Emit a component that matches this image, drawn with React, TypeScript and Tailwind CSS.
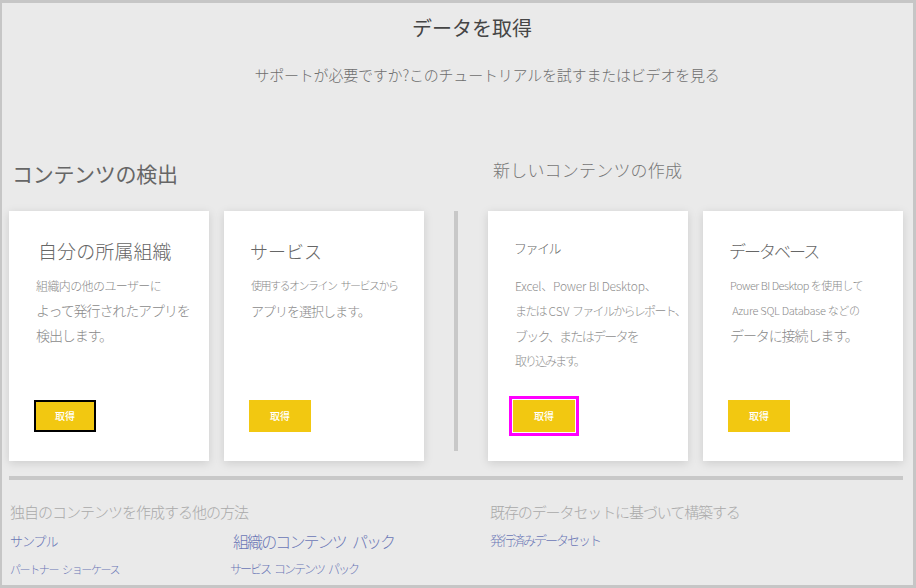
import React from "react";

type Line = { text: React.ReactNode; cls: string };

function GetButton({ variant }: { variant?: "focus" | "magenta" }) {
  const base =
    "w-[62px] h-[32px] bg-[#f2c811] text-white text-[10px] font-medium flex items-center justify-center leading-none box-border";
  if (variant === "focus") {
    return <div className={base + " border-2 border-black"}>取得</div>;
  }
  if (variant === "magenta") {
    return (
      <div className={base + " shadow-[0_0_0_1px_#ffffff,0_0_0_4px_#ff00ff]"}>取得</div>
    );
  }
  return <div className={base}>取得</div>;
}

function Card({
  title,
  titleCls,
  lines,
  variant,
}: {
  title: string;
  titleCls: string;
  lines: Line[];
  variant?: "focus" | "magenta";
}) {
  return (
    <div className="w-[200px] h-[250px] bg-white shadow-[0_2px_9px_rgba(0,0,0,0.13)] flex flex-col pl-[25px] pb-[29px]">
      <div className={"pt-[26px] h-[54px] leading-[28px] whitespace-nowrap " + titleCls}>{title}</div>
      <div className="mt-[8px] pl-[2px] flex flex-col">
        {lines.map((l, i) => (
          <div key={i} className={"h-[25px] leading-[25px] whitespace-nowrap " + l.cls}>
            {l.text}
          </div>
        ))}
      </div>
      <div className="mt-auto">
        <GetButton variant={variant} />
      </div>
    </div>
  );
}

export default function App() {
  return (
    <div className="w-[916px] h-[588px] box-border bg-[#eaeaea] border-solid border-[#c6c6c6] border-t-[3px] border-l-[2px] border-r-[3px] border-b-[3px] flex flex-col font-['Noto_Sans_CJK_JP',sans-serif] font-light overflow-hidden">
      {/* header */}
      <div className="pt-[11px] pl-[29px] text-center text-[20px] leading-[28px] text-[#454545] font-normal">
        データを取得
      </div>
      <div className="mt-[22px] pl-[59px] text-center text-[15px] leading-[22px] text-[#6e6e6e] tracking-[-0.2px]">
        サポートが必要ですか?このチュートリアルを試すまたはビデオを見る
      </div>

      {/* section headings */}
      <div className="mt-[72px] h-[53px] pl-[7px] grid grid-cols-[415px_64px_415px] items-start">
        <div className="mt-[1px] pl-[3px] text-[21px] leading-[28px] text-[#666666] tracking-[-0.3px] font-normal">
          コンテンツの検出
        </div>
        <div />
        <div className="pl-[5px] text-[17px] leading-[24px] text-[#777777] tracking-[0.2px]">
          新しいコンテンツの作成
        </div>
      </div>

      {/* cards row */}
      <div className="pl-[7px] flex items-start">
        <div className="flex gap-[15px]">
          <Card
            title="自分の所属組織"
            titleCls="text-[19px] tracking-[0.1px] text-[#666666] ml-[4px]"
            variant="focus"
            lines={[
              { text: "組織内の他のユーザーに", cls: "text-[12px] tracking-[-0.6px] text-[#8a8a8a]" },
              { text: "よって発行されたアプリを", cls: "text-[14px] tracking-[-1.1px] text-[#8a8a8a]" },
              { text: "検出します。", cls: "text-[14px] tracking-[-1.1px] text-[#8a8a8a]" },
            ]}
          />
          <Card
            title="サービス"
            titleCls="text-[18px] text-[#666666] ml-[1px]"
            lines={[
              { text: "使用するオンライン\u2002サービスから", cls: "text-[11px] tracking-[-1.5px] text-[#8a8a8a]" },
              { text: "アプリを選択します。", cls: "text-[13px] tracking-[-1px] text-[#8a8a8a]" },
            ]}
          />
        </div>
        <div className="mx-[30px] w-[4px] h-[240px] bg-[#c8c8c8]" />
        <div className="flex gap-[15px]">
          <Card
            title="ファイル"
            titleCls="text-[13px] tracking-[-1.5px] text-[#666666] ml-[1px] !pt-[23px]"
            variant="magenta"
            lines={[
              { text: "Excel、Power BI Desktop、", cls: "text-[12px] tracking-[-0.2px] text-[#8f8f8f]" },
              {
                text: (
                  <>
                    または
                    <span className="tracking-[0px]">{"\u00a0CSV\u00a0"}</span>
                    ファイルからレポート、
                  </>
                ),
                cls: "text-[12px] tracking-[-1.7px] text-[#8f8f8f]",
              },
              { text: "ブック、またはデータを", cls: "text-[13px] tracking-[-1.7px] text-[#8f8f8f]" },
              { text: "取り込みます。", cls: "text-[12px] tracking-[-2px] text-[#8f8f8f]" },
            ]}
          />
          <Card
            title="データベース"
            titleCls="text-[17px] tracking-[-2px] text-[#666666] ml-[1px]"
            lines={[
              { text: "Power BI Desktop を使用して", cls: "text-[11px] tracking-[-0.5px] text-[#8a8a8a]" },
              { text: "\u00a0Azure SQL Database などの", cls: "text-[11px] tracking-[-0.3px] text-[#8a8a8a]" },
              { text: "データに接続します。", cls: "text-[14px] tracking-[-1.1px] text-[#8a8a8a]" },
            ]}
          />
        </div>
      </div>

      {/* horizontal divider */}
      <div className="mt-[15px] ml-[7px] w-[894px] h-[4px] bg-[#c8c8c8]" />

      {/* bottom section */}
      <div className="mt-[22px] grid grid-cols-[488px_1fr]">
        <div className="pl-[8px] flex flex-col">
          <div className="h-[20px] leading-[20px] text-[15px] tracking-[-1px] text-[#a9a9a9] whitespace-nowrap">
            独自のコンテンツを作成する他の方法
          </div>
          <div className="mt-[9px] grid grid-cols-[220px_1fr] gap-y-[8px] text-[#6b77b6] whitespace-nowrap">
            <div className="h-[20px] leading-[20px] text-[13px] tracking-[-1px]">サンプル</div>
            <div className="h-[20px] leading-[20px] text-[16px] tracking-[-1.9px] pl-[3px]">
              組織のコンテンツ{"\u2002"}パック
            </div>
            <div className="h-[20px] leading-[20px] text-[11px] tracking-[-1.4px]">
              パートナー{"\u2002"}ショーケース
            </div>
            <div className="h-[20px] leading-[20px] text-[12px] tracking-[-2px]">
              サービス{"\u2002"}コンテンツ{"\u2002"}パック
            </div>
          </div>
        </div>
        <div className="flex flex-col">
          <div className="h-[20px] leading-[20px] text-[15px] tracking-[-1.1px] text-[#a9a9a9] whitespace-nowrap">
            既存のデータセットに基づいて構築する
          </div>
          <div className="mt-[8px] h-[20px] leading-[20px] text-[13px] tracking-[-2px] text-[#6b77b6] whitespace-nowrap">
            発行済みデータセット
          </div>
        </div>
      </div>
    </div>
  );
}
